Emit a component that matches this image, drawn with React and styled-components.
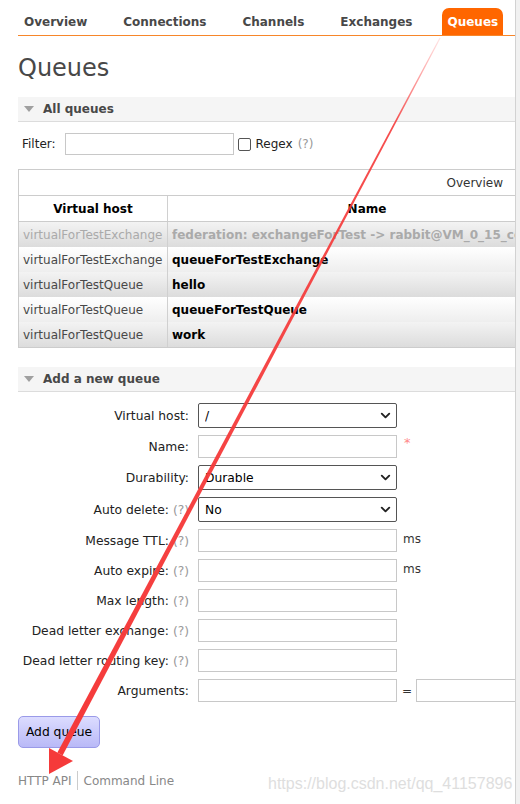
import React from 'react';
import styled, { createGlobalStyle } from 'styled-components';
import { ChevronDown } from 'lucide-react';

const GlobalStyle = createGlobalStyle`
  html, body {
    margin: 0;
    padding: 0;
    background: #fff;
  }
  body {
    font-family: "DejaVu Sans", Verdana, sans-serif;
    font-size: 12px;
    color: #484848;
  }
  * {
    box-sizing: border-box;
  }
`;

const Page = styled.div`
  position: relative;
  display: flex;
  width: 520px;
  height: 804px;
  overflow: hidden;
`;

const Main = styled.div`
  flex: none;
  width: 515px;
  padding-left: 18px;
  overflow: hidden;
`;

const Gutter = styled.div`
  flex: 1;
  background: #f1f1f1;
  border-left: 1px solid #d2d2d2;
`;

const Tabs = styled.ul`
  display: flex;
  gap: 24px;
  margin: 0;
  padding: 8px 0 0;
  list-style: none;
  border-bottom: 1px solid #f7862a;
`;

const Tab = styled.li`
  height: 27px;
  line-height: 28px;
  padding: 0 ${(p) => (p.$active ? 5 : 6)}px;
  font-weight: bold;
  color: ${(p) => (p.$active ? '#fff' : '#484848')};
  background: ${(p) => (p.$active ? '#ff6600' : 'transparent')};
  border-radius: 7px 7px 0 0;
`;

const Title = styled.h1`
  margin: 18px 0 15px;
  font-size: 24px;
  line-height: 28px;
  font-weight: normal;
  color: #484848;
`;

const SectionHead = styled.div`
  display: flex;
  align-items: center;
  gap: 9px;
  height: 25px;
  margin-top: ${(p) => p.$top || 0}px;
  padding-left: 6px;
  background: #f5f5f5;
  border-bottom: 1px solid #dcdcdc;
  font-weight: bold;
  color: #484848;
`;

const FilterRow = styled.div`
  display: flex;
  align-items: center;
  height: 22px;
  margin-top: 11px;
  padding-left: 4px;
  color: #222;
`;

const FilterInput = styled.input`
  width: 169px;
  height: 22px;
  margin: 0 4px 0 9px;
  border: 1px solid #c8c8c8;
`;

const Check = styled.input`
  appearance: none;
  width: 13px;
  height: 13px;
  margin: 0 5px 0 0;
  border: 1px solid #555;
  border-radius: 2px;
  background: #fff;
`;

const Help = styled.span`
  color: #999;
  margin-left: ${(p) => p.$gap || 0}px;
`;

const Table = styled.div`
  margin-top: 14px;
  border: 1px solid #cccccc;
  border-right: none;
  overflow: hidden;
`;

const GroupRow = styled.div`
  display: flex;
  align-items: center;
  justify-content: flex-end;
  height: 26px;
  padding-right: 12px;
  border-bottom: 1px solid #cccccc;
  color: #333;
`;

const Row = styled.div`
  display: grid;
  grid-template-columns: 149px 398px;
  width: 547px;
  height: ${(p) => (p.$head ? 26 : 25)}px;
  border-bottom: ${(p) => (p.$head ? '1px solid #cccccc' : 'none')};
  background: ${(p) =>
    p.$head
      ? '#fff'
      : p.$alt
      ? 'linear-gradient(#f3f3f3, #dcdcdc)'
      : 'linear-gradient(#ffffff, #eeeeee)'};
`;

const Cell = styled.div`
  display: flex;
  align-items: center;
  justify-content: ${(p) => (p.$head ? 'center' : 'flex-start')};
  padding: 0 4px;
  white-space: nowrap;
  overflow: hidden;
  border-right: ${(p) => (p.$first ? '1px solid #d0d0d0' : 'none')};
  font-weight: ${(p) => (p.$bold ? 'bold' : 'normal')};
  color: ${(p) => (p.$muted ? '#aaaaaa' : p.$bold ? '#000' : '#484848')};
`;

const Form = styled.div`
  display: grid;
  grid-template-columns: 176px 199px auto;
  column-gap: 4px;
  row-gap: 7px;
  align-items: center;
  margin-top: 11px;
`;

const Label = styled.div`
  padding-right: 5px;
  text-align: right;
  white-space: nowrap;
  font-size: 12.3px;
  color: #222;
`;

const SelectWrap = styled.div`
  position: relative;
  width: 199px;
  height: 25px;
`;

const Select = styled.select`
  appearance: none;
  width: 100%;
  height: 100%;
  padding: 0 0 0 6px;
  border: 1px solid #555;
  border-radius: 2px;
  background: #fff;
  font: 12.3px "DejaVu Sans", Verdana, sans-serif;
  color: #000;
`;

const Chevron = styled(ChevronDown)`
  position: absolute;
  right: 4px;
  top: 5px;
  pointer-events: none;
`;

const TextInput = styled.input`
  width: ${(p) => p.$w || 199}px;
  height: 23px;
  border: 1px solid #c8c8c8;
  background: #fff;
`;

const Extra = styled.div`
  display: flex;
  align-items: center;
  gap: 4px;
  padding-left: ${(p) => p.$pad || 0}px;
  color: #333;
  white-space: nowrap;
`;

const Unit = styled.span`
  margin-top: -4px;
`;

const Star = styled.span`
  align-self: flex-start;
  color: #f88;
  font-size: 13px;
  margin-top: -8px;
`;

const Button = styled.button`
  display: block;
  margin-top: 14px;
  width: 82px;
  height: 32px;
  border: 1px solid #9a9ae8;
  border-radius: 5px;
  background: linear-gradient(#dcdcff, #b9b9f7);
  font: 12.3px "DejaVu Sans", Verdana, sans-serif;
  color: #000;
`;

const Footer = styled.div`
  display: flex;
  align-items: center;
  height: 19px;
  margin-top: 23px;
  color: #888;
`;

const Divider = styled.span`
  width: 1px;
  height: 19px;
  margin: 0 6px 0 5px;
  background: #cccccc;
`;

const Watermark = styled.div`
  position: absolute;
  left: 268px;
  top: 775px;
  font: 16px "Liberation Sans", Arial, sans-serif;
  color: #dedede;
  pointer-events: none;
`;

const Overlay = styled.svg`
  position: absolute;
  left: 0;
  top: 0;
  pointer-events: none;
`;

const Toggle = () => (
  <svg width="10" height="6" viewBox="0 0 10 6">
    <polygon points="0,0 10,0 5,6" fill="#a0a0a0" />
  </svg>
);

const tabs = ['Overview', 'Connections', 'Channels', 'Exchanges', 'Queues'];

const queues = [
  { vhost: 'virtualForTestExchange', name: 'federation: exchangeForTest -> rabbit@VM_0_15_centos', muted: true },
  { vhost: 'virtualForTestExchange', name: 'queueForTestExchange' },
  { vhost: 'virtualForTestQueue', name: 'hello' },
  { vhost: 'virtualForTestQueue', name: 'queueForTestQueue' },
  { vhost: 'virtualForTestQueue', name: 'work' },
];

const Field = ({ label, help, children }) => (
  <>
    <Label>
      {label}
      {help && <Help $gap={4}>(?)</Help>}
    </Label>
    {children}
  </>
);

const Dropdown = ({ value }) => (
  <SelectWrap>
    <Select defaultValue={value}>
      <option>{value}</option>
    </Select>
    <Chevron size={15} strokeWidth={3} color="#222" />
  </SelectWrap>
);

const Arrow = () => (
  <Overlay width="520" height="804" viewBox="0 0 520 804">
    <defs>
      <linearGradient id="shaft" x1="440" y1="38" x2="60" y2="754" gradientUnits="userSpaceOnUse">
        <stop offset="0" stopColor="#ff4d4d" stopOpacity="0.15" />
        <stop offset="0.12" stopColor="#f53a3a" stopOpacity="0.9" />
        <stop offset="1" stopColor="#f53a3a" />
      </linearGradient>
    </defs>
    <polygon points="440.5,38.2 439.5,37.8 57.4,752.6 62.6,755.4" fill="url(#shaft)" />
    <polygon points="49,774 49,748 73,761" fill="#f53a3a" />
  </Overlay>
);

const App = () => (
  <>
    <GlobalStyle />
    <Page>
      <Main>
        <Tabs>
          {tabs.map((t) => (
            <Tab key={t} $active={t === 'Queues'}>
              {t}
            </Tab>
          ))}
        </Tabs>

        <Title>Queues</Title>

        <SectionHead>
          <Toggle />
          All queues
        </SectionHead>

        <FilterRow>
          Filter:
          <FilterInput type="text" />
          <Check type="checkbox" />
          Regex
          <Help $gap={5}>(?)</Help>
        </FilterRow>

        <Table>
          <GroupRow>Overview</GroupRow>
          <Row $head>
            <Cell $head $first $bold>
              Virtual host
            </Cell>
            <Cell $head $bold>
              Name
            </Cell>
          </Row>
          {queues.map((q, i) => (
            <Row key={q.name} $alt={i % 2 === 0}>
              <Cell $first $muted={q.muted}>
                {q.vhost}
              </Cell>
              <Cell $bold $muted={q.muted}>
                {q.name}
              </Cell>
            </Row>
          ))}
        </Table>

        <SectionHead $top={19}>
          <Toggle />
          Add a new queue
        </SectionHead>

        <Form>
          <Field label="Virtual host:">
            <Dropdown value="/" />
          </Field>
          <span />
          <Field label="Name:">
            <TextInput type="text" />
          </Field>
          <Extra $pad={3}>
            <Star>*</Star>
          </Extra>
          <Field label="Durability:">
            <Dropdown value="Durable" />
          </Field>
          <span />
          <Field label="Auto delete:" help>
            <Dropdown value="No" />
          </Field>
          <span />
          <Field label="Message TTL:" help>
            <TextInput type="text" />
          </Field>
          <Extra $pad={2}>
            <Unit>ms</Unit>
          </Extra>
          <Field label="Auto expire:" help>
            <TextInput type="text" />
          </Field>
          <Extra $pad={2}>
            <Unit>ms</Unit>
          </Extra>
          <Field label="Max length:" help>
            <TextInput type="text" />
          </Field>
          <span />
          <Field label="Dead letter exchange:" help>
            <TextInput type="text" />
          </Field>
          <span />
          <Field label="Dead letter routing key:" help>
            <TextInput type="text" />
          </Field>
          <span />
          <Field label="Arguments:">
            <TextInput type="text" />
          </Field>
          <Extra $pad={1}>
            =
            <TextInput type="text" $w={120} />
          </Extra>
        </Form>

        <Button type="button">Add queue</Button>

        <Footer>
          HTTP API
          <Divider />
          Command Line
        </Footer>
      </Main>
      <Gutter />
      <Watermark>https://blog.csdn.net/qq_41157896</Watermark>
      <Arrow />
    </Page>
  </>
);

export default App;
